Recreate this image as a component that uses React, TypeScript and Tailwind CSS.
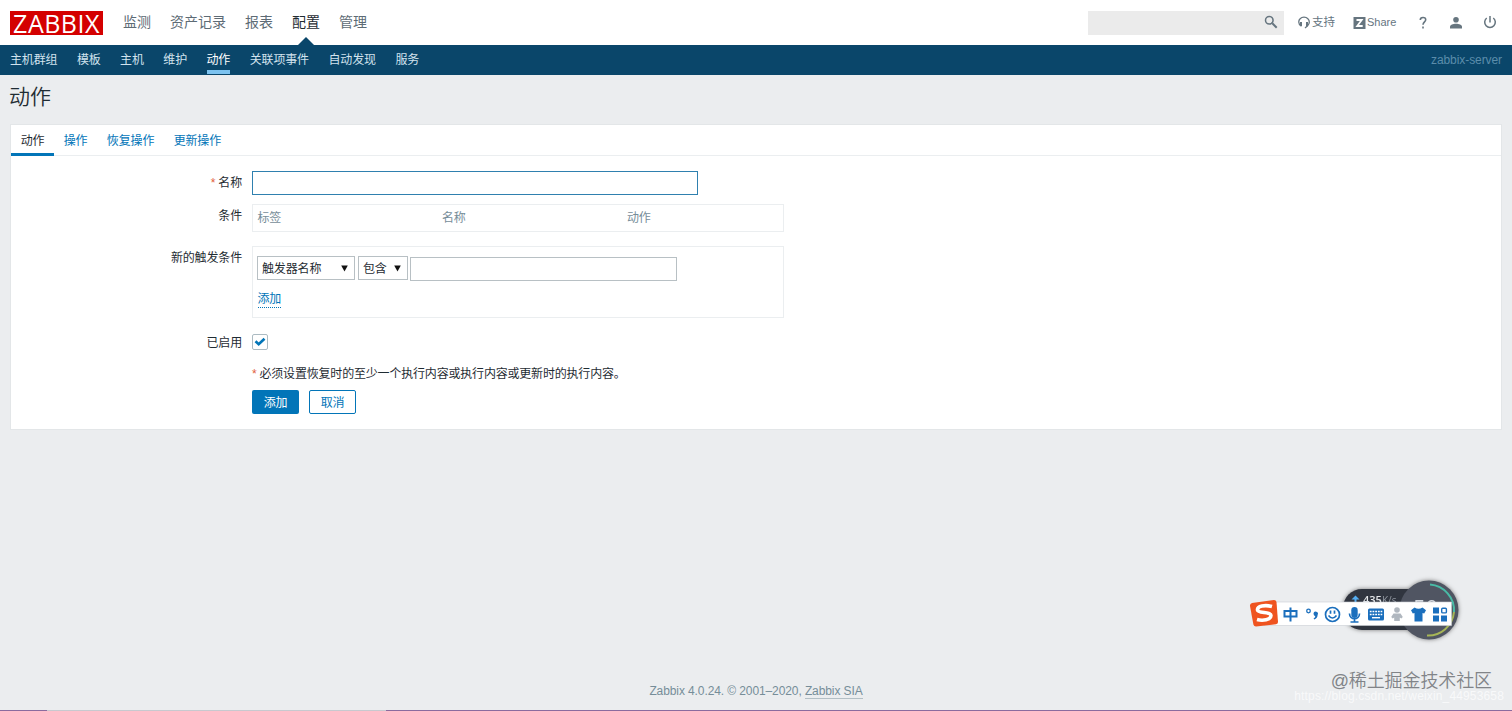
import clsx from "clsx";
import type { ReactNode } from "react";

const menu = ["监测", "资产记录", "报表", "配置", "管理"];
const subMenu = [
  "主机群组",
  "模板",
  "主机",
  "维护",
  "动作",
  "关联项事件",
  "自动发现",
  "服务",
];
const tabs = ["动作", "操作", "恢复操作", "更新操作"];

const Header = () => (
  <header className="flex h-[45px] items-center bg-white pl-[10px] pr-[15px] tracking-normal">
    <a className="flex h-6 w-[93px] items-center justify-center bg-[#d40000] font-['Open_Sans',sans-serif] text-[25px] leading-[34px] tracking-[0.5px] text-white">
      ZABBIX
    </a>
    <nav className="ml-5 flex h-full gap-[19px] text-[14px] text-[#5d6b75]">
      {menu.map((item) => (
        <a
          key={item}
          className={clsx(
            "relative flex h-full items-center",
            item === "配置" && "text-[#1f2c33]"
          )}
        >
          {item}
          {item === "配置" && (
            <span className="absolute bottom-0 left-1/2 -translate-x-1/2 border-x-8 border-b-8 border-x-transparent border-b-[#0a466a]" />
          )}
        </a>
      ))}
    </nav>
    <div className="ml-auto flex items-center text-[11.5px] text-[#66757f]">
      <div className="flex h-6 w-[196px] items-center justify-end bg-[#ebebeb] pr-[6px]">
        <svg className="-mt-[2px]" width="14" height="14" viewBox="0 0 14 14" fill="none" stroke="#66757f">
          <circle cx="5.3" cy="5.3" r="3.8" strokeWidth="1.5" />
          <path d="M8.3 8.3 12.7 12.7" strokeWidth="2" />
        </svg>
      </div>
      <a className="ml-[14px] flex items-center gap-[2px]">
        <svg width="12" height="13" viewBox="0 0 12 13" fill="none" stroke="#66757f">
          <path d="M2.800 9.800C.3 8 .2 4.500 2.100 2.700c2.100-2.200 5.700-2.200 7.800 0 2 2 1.800 5.300-.3 7.100L7 12" strokeWidth="1.300" />
          <path d="M3 6v4.200M9 6v4.200" strokeWidth="2" />
        </svg>
        <span className="w-6">支持</span>
      </a>
      <a className="ml-[17px] flex items-center gap-[1px]">
        <svg width="13" height="12" viewBox="0 0 13 12">
          <path d="M.5 0h12v12H.5z" fill="#66757f" />
          <path d="M3.500 3h5.200L4.200 9h5.500" fill="none" stroke="#fff" strokeWidth="1.800" />
        </svg>
        <span className="w-[29px] text-[11px]">Share</span>
      </a>
      <svg className="ml-[23px]" width="8" height="13" viewBox="0 0 8 13" fill="none" stroke="#66757f">
        <path d="M1.300 3.900C1.300.7 6.700.6 6.700 3.700 6.700 5.800 4 6 4 8.800M4 10.500v2" strokeWidth="1.600" />
      </svg>
      <svg className="ml-[23px]" width="12" height="12" viewBox="0 0 12 12" fill="#66757f">
        <circle cx="6" cy="2.8" r="2.800" />
        <path d="M0 11.500V9.700c0-2 3-3 6-3s6 1 6 3v1.800z" />
      </svg>
      <svg className="ml-[21px]" width="14" height="13" viewBox="0 0 14 13" fill="none" stroke="#66757f">
        <path d="M7 0v6.500M3.700 2A5.300 5.300 0 1 0 10.300 2" strokeWidth="1.500" />
      </svg>
    </div>
  </header>
);

const SubMenu = () => (
  <nav className="flex h-[30px] items-center gap-[19.5px] bg-[#0a466a] px-[10px] text-[#d2e3ee]">
    {subMenu.map((item) => (
      <a
        key={item}
        className={clsx(
          "relative flex h-full items-center",
          item === "动作" && "text-white"
        )}
      >
        {item}
        {item === "动作" && (
          <span className="absolute inset-x-0 bottom-[1px] h-[4px] bg-[#7cc3f0]" />
        )}
      </a>
    ))}
    <span className="ml-auto tracking-[-0.08px] text-[#5b8dab]">zabbix-server</span>
  </nav>
);

const Row = ({
  label,
  required,
  className,
  children,
}: {
  label?: string;
  required?: boolean;
  className?: string;
  children: ReactNode;
}) => (
  <div className={clsx("flex gap-[10px]", className)}>
    <div className="flex h-6 w-[231px] shrink-0 items-center justify-end gap-[3px]">
      {required && <span className="text-[#e2603c]">*</span>}
      {label}
    </div>
    {children}
  </div>
);

const Select = ({ value, className }: { value: string; className: string }) => (
  <button
    className={clsx(
      "flex h-6 items-center justify-between border border-[#b8c0c4] bg-white pl-1 pr-[6px] text-[#1f2c33]",
      className
    )}
  >
    <span className="pt-[2px]">{value}</span>
    <svg width="7" height="7" viewBox="0 0 7 7">
      <path d="M.2 .5h6.600L3.500 6.500z" fill="#111" />
    </svg>
  </button>
);

const ActionForm = () => (
  <section className="mx-[10px] h-[306px] border border-[#e3e6e8] bg-white">
    <div className="flex h-[31px] border-b border-[#ebeef0] text-[#0275b8]">
      {tabs.map((tab, i) => (
        <a
          key={tab}
          className={clsx(
            "flex h-[31px] items-center px-[9.700px]",
            i === 0 && "border-b-[3px] border-[#0275b8] pt-[3px] text-[#1f2c33]"
          )}
        >
          {tab}
        </a>
      ))}
    </div>
    <Row label="名称" required className="mt-[15px]">
      <div className="h-6 w-[446px] border border-[#2f80af]" />
    </Row>
    <Row label="条件" className="mt-[9px]">
      <div className="grid h-[28px] w-[532px] grid-cols-[184.500px_185px_1fr] items-center border border-[#ebeef0] pl-[4.500px] text-[#768d99]">
        <span>标签</span>
        <span>名称</span>
        <span>动作</span>
      </div>
    </Row>
    <Row label="新的触发条件" className="mt-[14px]">
      <div className="h-[72px] w-[532px] border border-[#ebeef0] pl-1 pt-[9px]">
        <div className="flex">
          <Select value="触发器名称" className="w-[98px]" />
          <Select value="包含" className="ml-[3px] w-[50px]" />
          <div className="ml-[2px] mt-px h-6 w-[267px] border border-[#b8c0c4]" />
        </div>
        <a className="ml-[0.5px] mt-[10px] inline-block h-[17px] border-b border-dotted border-[#0275b8] leading-[17px] text-[#0275b8]">
          添加
        </a>
      </div>
    </Row>
    <Row label="已启用" className="mt-[13px]">
      <div className="mt-[3px] flex h-4 w-4 items-center justify-center rounded-[2px] border border-[#acbbc2]">
        <svg width="12" height="10" viewBox="0 0 12 10" fill="none" stroke="#0275b8">
          <path d="M1.500 4.300 4.700 7.300 10.500 1.800" strokeWidth="2.600" />
        </svg>
      </div>
    </Row>
    <Row className="mt-[7px]">
      <div className="flex h-6 items-center gap-[3px] tracking-[-0.19px]">
        <span className="text-[#e2603c]">*</span>
        必须设置恢复时的至少一个执行内容或执行内容或更新时的执行内容。
      </div>
    </Row>
    <Row className="mt-[4px]">
      <div className="flex gap-[10px]">
        <button className="h-6 w-[47px] rounded-[2px] bg-[#0275b8] pt-px text-white">
          添加
        </button>
        <button className="h-6 w-[47px] rounded-[2px] border border-[#0275b8] pt-px text-[#0275b8]">
          取消
        </button>
      </div>
    </Row>
  </section>
);

const SpeedWidget = () => (
  <div className="absolute left-[1342px] top-[579px] h-[62px] w-[118px] tracking-normal">
    <svg width="118" height="62" viewBox="0 0 118 62" className="drop-shadow-[0_0_2px_#777]">
      <rect x="1" y="10" width="90" height="41" rx="19" fill="#30353f" />
      <path d="M13.500 16.500 9.500 20.500h3v4h2v-4h3z" fill="#55aef2" />
      <text x="21" y="25" fill="#e6e8eb" fontSize="11" fontFamily="Open Sans" fontWeight="600">435</text>
      <text x="40" y="25" fill="#9298a1" fontSize="10" fontFamily="Open Sans">K/s</text>
      <circle cx="87" cy="31" r="29.500" fill="#505562" />
      <text x="71" y="37" fill="#d5d9df" fontSize="22" fontFamily="Open Sans">50</text>
      <path d="M88 5.500A26 26 0 0 1 112 33" fill="none" stroke="#49bba6" strokeWidth="2" />
      <path d="M112 33A26 26 0 0 1 85 56.500" fill="none" stroke="#a7b657" strokeWidth="2" />
    </svg>
  </div>
);

const InputBar = () => (
  <div className="absolute left-[1248px] top-[598px] h-[30px] w-[204px]">
    <svg width="204" height="30" viewBox="0 0 204 30" fill="#1b6fbd">
      <path d="M16 4h187.500v23.500H16z" fill="#fff" stroke="#c9ced3" strokeWidth=".6" />
      <path d="M4 5 26 2q2 0 2.500 2l1.500 20q0 2-2 2.300L8 28.500q-2 0-2.600-2L2 8q-.2-2.500 2-3z" fill="#ef5420" />
      <path d="M24 8.500C17 6.500 9 8 9.500 12c.5 3.500 13.500 1.500 13.500 5.500 0 4.500-8.500 5.500-14 4" fill="none" stroke="#fff" strokeWidth="3.600" />
      <path d="M36.500 13h12v5.500h-12zM42.500 9.500v14" fill="none" stroke="#1b6fbd" strokeWidth="2" />
      <circle cx="60.500" cy="13" r="1.800" fill="none" stroke="#1b6fbd" strokeWidth="1.300" />
      <path d="M65.500 15.500a2.200 2.200 0 1 1 4.100 1.400c0 2.200-1.200 3.800-3.400 4.600l-.6-.9q1.600-1 1.700-2.300-1.800-.5-1.800-2.800z" />
      <g fill="none" stroke="#1b6fbd" strokeWidth="1.700">
        <circle cx="84.500" cy="16.500" r="7" />
        <path d="M82.500 12.500v3.200M86.500 12.500v3.200M80.500 17.500q4 5 8 0" />
        <path d="M101.500 15.500c0 7 10 7 10 0M106.500 21v3M102.500 24h8" />
      </g>
      <rect x="103.300" y="9" width="6.400" height="11" rx="3.200" />
      <rect x="120" y="10.500" width="16" height="12" rx="1.500" />
      <path d="M121.800 13.500h12.500M121.800 16.500h12.500" stroke="#fff" strokeWidth="1.500" strokeDasharray="1.800 .9" />
      <path d="M124 19.700h8" stroke="#fff" strokeWidth="1.400" />
      <g fill="#b0b7bf">
        <circle cx="149" cy="12" r="2.800" />
        <path d="M145.500 15.500h7l2.300 3.500-1.500 1.500-1.500-1v3.500h-5.600v-3.500l-1.500 1-1.500-1.500z" />
      </g>
      <path d="M166.500 9.500q4 2.500 8 0l3.500 2.800-1.800 3.200-1.700-.5v8.500h-8V15l-1.700.5L163 12.300z" />
      <path d="M185 9.500h6v6h-6zM185 17.500h6v6h-6zM193 17.500h6v6h-6z" />
      <rect x="193.700" y="10.200" width="4.700" height="4.700" rx="1" fill="none" stroke="#1b6fbd" strokeWidth="1.400" />
    </svg>
  </div>
);

export default function App() {
  return (
    <div className="relative flex h-[711px] w-[1512px] flex-col overflow-hidden bg-[#ebedef] font-['Liberation_Sans','Noto_Sans_CJK_SC',sans-serif] text-[12px] tracking-[-0.15px] text-[#1f2c33]">
      <Header />
      <SubMenu />
      <h1 className="flex h-[49px] items-start pl-[9px] pt-[6px] text-[21px] font-[350] leading-8 tracking-normal">
        动作
      </h1>
      <ActionForm />
      <footer className="mt-auto flex h-[37px] justify-center tracking-[-0.1px] text-[#768d99]">
        <p className="h-[18px] leading-[36px]">
          Zabbix 4.0.24. © 2001–2020,{" "}
          <a className="border-b border-[#b3bfc5]">Zabbix SIA</a>
        </p>
      </footer>
      <div className="flex h-px shrink-0">
        <span className="w-[47px] bg-[#8b6b9e]" />
        <span className="w-[339px] bg-[#c8c9cf]" />
        <span className="flex-1 bg-[#8b6b9e]" />
      </div>
      <SpeedWidget />
      <InputBar />
      <div className="absolute right-[8px] top-[688px] text-[12px] leading-4 tracking-[0.15px] text-white/70">
        https://blog.csdn.net/weixin_44953658
      </div>
      <div className="absolute right-5 top-[669px] text-[18px] font-[350] leading-6 tracking-[-0.1px] text-[#818488]">
        @稀土掘金技术社区
      </div>
    </div>
  );
}
